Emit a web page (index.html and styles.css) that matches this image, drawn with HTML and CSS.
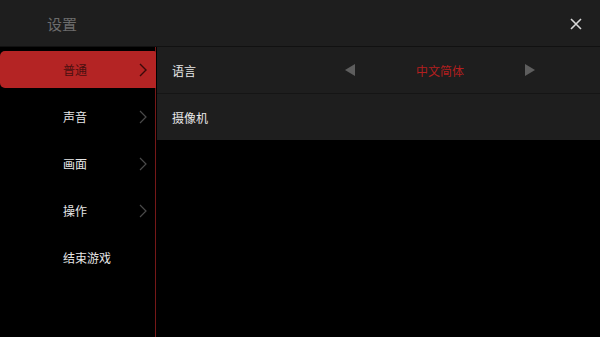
FILE: index.html
```html
<!DOCTYPE html>
<html lang="zh-CN">
<head>
<meta charset="utf-8">
<title>设置</title>
<link rel="stylesheet" href="styles.css">
</head>
<body>
<div class="app">
  <header class="header">
    <h1 class="title">设置</h1>
    <button class="close" aria-label="关闭">
      <svg width="12" height="12" viewBox="0 0 12 12"><path d="M1 1 L11 11 M11 1 L1 11" stroke="#d8d8d8" stroke-width="1.6" fill="none"/></svg>
    </button>
  </header>
  <main class="main">
    <nav class="nav">
      <div class="nav-item active"><span>普通</span>
        <svg class="chev" width="8" height="14" viewBox="0 0 8 14"><path d="M1 1 L7 7 L1 13" stroke="currentColor" stroke-width="1.4" fill="none"/></svg></div>
      <div class="nav-item"><span>声音</span>
        <svg class="chev" width="8" height="14" viewBox="0 0 8 14"><path d="M1 1 L7 7 L1 13" stroke="currentColor" stroke-width="1.2" fill="none"/></svg></div>
      <div class="nav-item"><span>画面</span>
        <svg class="chev" width="8" height="14" viewBox="0 0 8 14"><path d="M1 1 L7 7 L1 13" stroke="currentColor" stroke-width="1.2" fill="none"/></svg></div>
      <div class="nav-item"><span>操作</span>
        <svg class="chev" width="8" height="14" viewBox="0 0 8 14"><path d="M1 1 L7 7 L1 13" stroke="currentColor" stroke-width="1.2" fill="none"/></svg></div>
      <div class="nav-item"><span>结束游戏</span></div>
    </nav>
    <section class="panel">
      <div class="row">
        <span class="label">语言</span>
        <div class="picker">
          <svg class="tri" width="11" height="12" viewBox="0 0 11 12"><path d="M10 0 L10 12 L0 6 Z" fill="#5e5e5e"/></svg>
          <span class="value">中文简体</span>
          <svg class="tri" width="11" height="12" viewBox="0 0 11 12"><path d="M1 0 L1 12 L11 6 Z" fill="#5e5e5e"/></svg>
        </div>
      </div>
      <div class="row">
        <span class="label">摄像机</span>
      </div>
    </section>
  </main>
</div>
</body>
</html>
```
FILE: styles.css
```css
* { box-sizing: border-box; }
html, body { margin: 0; padding: 0; background: #000; }
body {
  width: 600px;
  height: 337px;
  overflow: hidden;
  font-family: "Noto Sans CJK SC", "Noto Sans", sans-serif;
}
.app { display: flex; flex-direction: column; height: 337px; }
.header {
  height: 47px;
  background: #1e1e1e;
  display: flex;
  align-items: center;
  justify-content: space-between;
  padding: 0 18px 0 47px;
  border-bottom: 1px solid #111;
}
.title {
  margin: 0;
  font-size: 15px;
  font-weight: normal;
  color: #6c6c6c;
}
.close {
  background: none;
  border: 0;
  padding: 0;
  width: 12px;
  height: 12px;
  display: flex;
  margin-top: 1px;
}
.main {
  flex: 1;
  display: flex;
}
.nav {
  width: 156px;
  border-right: 1px solid #761818;
  padding-top: 4px;
  display: flex;
  flex-direction: column;
  gap: 10px;
}
.nav-item {
  height: 37px;
  display: flex;
  align-items: center;
  padding: 0 8px 0 63px;
  font-size: 12px;
  color: #e6e6e6;
}
.nav-item .chev { margin-left: auto; color: #4a4a4a; }
.nav-item.active {
  background: #b42424;
  color: #4a1010;
  border-radius: 5px 2px 0 5px;
  margin-right: -1px;
  padding-right: 9px;
}
.nav-item.active .chev { color: #3a0a0a; }
.panel {
  flex: 1;
  padding: 0 0 0 1px;
  display: flex;
  flex-direction: column;
}
.row {
  height: 46px;
  background: #1e1e1e;
  display: flex;
  align-items: center;
  padding-left: 15px;
  font-size: 12px;
  color: #e8e8e8;
}
.row + .row { height: 47px; border-top: 1px solid #151515; }
.picker {
  margin-left: auto;
  margin-right: 65px;
  width: 190px;
  display: flex;
  align-items: center;
  justify-content: space-between;
}
.value { color: #b31f1f; font-size: 12px; }
```
